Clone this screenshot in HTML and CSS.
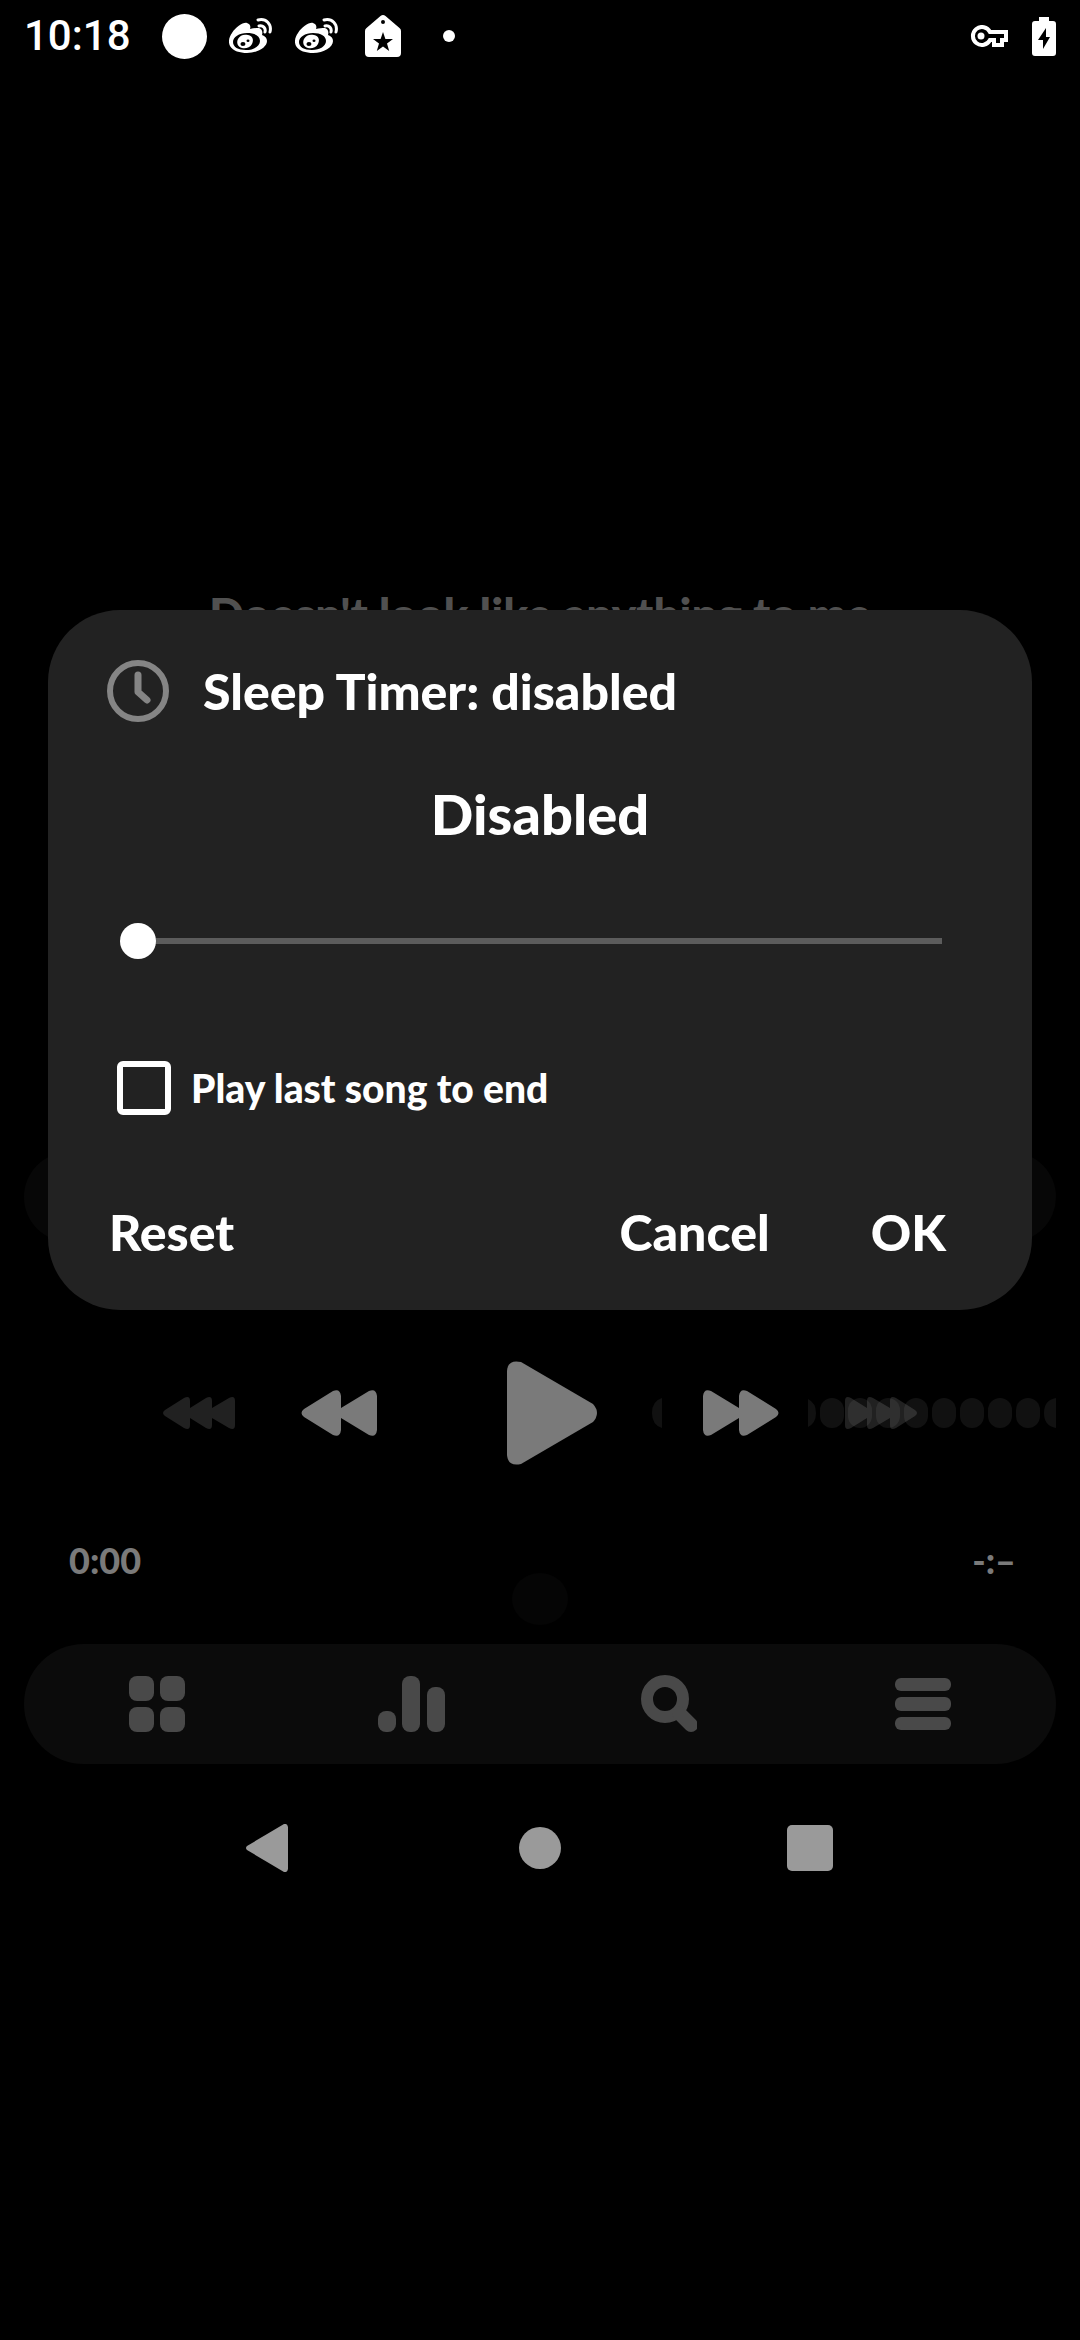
FILE: index.html
```html
<!DOCTYPE html>
<html lang="en">
<head>
<meta charset="utf-8">
<meta name="viewport" content="width=device-width, initial-scale=1">
<title>Sleep Timer</title>
<link rel="stylesheet" href="styles.css">
</head>
<body>
<svg hidden>
  <symbol id="weibo" viewBox="0 0 44 36">
    <path fill="currentColor" fill-rule="evenodd" d="M18 5c-4-1-11 4-15 10-3 4-4 9-2 13 3 5 10 7 17 7 11 0 20-6 20-12 0-3-2-5-5-6 1-3 0-6-3-7-3 0-6 0-9 1 1-3 0-5-3-6zM18 15c8 0 13 3 13 8s-6 9-14 9-13-3-13-8 6-9 14-9z"/>
    <path fill="currentColor" fill-rule="evenodd" d="M19 17c5 1 6 5 4 9s-7 5-10 4c-4-1-6-5-4-9s6-5 10-4zM14 24a2.500 2 0 1 0-.1 4 2.500 2 0 0 0 .1-4zM19 21.500a1.500 1.300 0 1 0 0 2.600 1.500 1.300 0 0 0 0-2.600z"/>
    <path fill="none" stroke="currentColor" stroke-width="3" stroke-linecap="round" d="M30 8c4-1 7 2 6 6M29 2c8-2 14 4 12 12"/>
  </symbol>
</svg>
<header class="status">
  <time class="clock">10:18</time>
  <svg class="s-circle" viewBox="0 0 45 45"><circle cx="22.500" cy="22.500" r="22.500" fill="currentColor"/></svg>
  <svg class="s-weibo" viewBox="0 0 44 36"><use href="#weibo"/></svg>
  <svg class="s-weibo" viewBox="0 0 44 36"><use href="#weibo"/></svg>
  <svg class="s-tag" viewBox="0 0 36 42"><path fill="currentColor" fill-rule="evenodd" d="M15.500 1q2.500-2 5 0L34.500 13q1.500 1 1.500 3v22q0 4-4 4H4q-4 0-4-4V16q0-2 1.500-3zM18 5a2 2 0 1 0 0 4 2 2 0 0 0 0-4zM18 17l-2.400 7H8l6 4.500L11.800 36 18 31.500l6.200 4.500-2.200-7.500 6-4.500h-7.600z"/></svg>
  <svg class="s-dot" viewBox="0 0 12 12"><circle cx="6" cy="6" r="6" fill="currentColor"/></svg>
  <svg class="s-key" viewBox="0 0 38 23"><path fill="none" stroke="currentColor" stroke-width="4" d="M20 7h16v8h-4v5h-8v-5h-4A9 9 0 1 1 20 7z"/><circle cx="11" cy="11" r="3.500" fill="currentColor"/></svg>
  <svg class="s-battery" viewBox="0 0 24 39"><path fill="currentColor" fill-rule="evenodd" d="M7 0h10v4h4q3 0 3 3v29q0 3-3 3H3q-3 0-3-3V7q0-3 3-3h4zM14 11L6 23h5v9l7-12h-4z"/></svg>
</header>

<main class="app">
  <section class="stage">
    <p class="lyric">Doesn't look like anything to me</p>
  </section>
  <div class="panel"></div>

  <section class="controls" aria-label="Playback">
    <svg class="wave" viewBox="0 0 404 30" fill="#111">
      <path d="M10 0Q0 3 0 15t10 15zM156 1q8 4 8 14t-8 14z"/>
      <rect x="168" width="24" height="30" rx="12"/><rect x="196" width="24" height="30" rx="12"/><rect x="224" width="24" height="30" rx="12"/><rect x="252" width="24" height="30" rx="12"/><rect x="280" width="24" height="30" rx="12"/><rect x="308" width="24" height="30" rx="12"/><rect x="336" width="24" height="30" rx="12"/><rect x="364" width="24" height="30" rx="12"/>
      <path d="M404 0Q392 2 392 15t12 15z"/>
    </svg>
    <button class="ctl faint" aria-label="Previous category"><svg width="72" height="32" viewBox="0 0 72 32"><path d="M27 4v24q0 6-6 3L2 19q-4-3 0-6L21 1q6-3 6 3zM27 11L43 1q6-3 6 3v24q0 6-6 3L27 21zM49 11L66 1q6-3 6 3v24q0 6-6 3L49 21z"/></svg></button>
    <button class="ctl" aria-label="Previous"><svg width="76" height="46" viewBox="0 0 76 46"><path d="M40 6v34q-1 8-8 5L3 27q-5-4 0-8L32 1q7-3 8 5zM40 18L68 1q7-3 8 5v34q-1 8-8 5L40 28z"/></svg></button>
    <button class="ctl play" aria-label="Play"><svg width="114" height="104" viewBox="0 0 114 104"><path d="M24 10q1-12 14-9l72 42q8 9 0 18l-72 42q-13 3-14-9z"/></svg></button>
    <button class="ctl" aria-label="Next"><svg width="76" height="46" viewBox="0 0 76 46"><path d="M36 18V6q1-8 8-5l29 18q5 4 0 8L44 45q-7 3-8-5V28L8 45q-7 3-8-5V6q1-8 8-5z"/></svg></button>
    <button class="ctl faint" aria-label="Next category"><svg width="72" height="32" viewBox="0 0 72 32"><path d="M22 11V4q0-6 6-3l17 10V4q0-6 6-3l19 12q4 3 0 6L51 31q-6 3-6-3v-7L28 31q-6 3-6-3v-7L6 31q-6 3-6-3V4q0-6 6-3z"/></svg></button>
  </section>

  <div class="times"><span>0:00</span><span>-:–</span></div>
  <div class="handle"></div>

  <nav class="tabs" aria-label="Main">
    <button aria-label="Library"><svg width="56" height="56"><rect width="25" height="25" rx="8"/><rect x="31" width="25" height="25" rx="8"/><rect y="31" width="25" height="25" rx="8"/><rect x="31" y="31" width="25" height="25" rx="8"/></svg></button>
    <button aria-label="Equalizer"><svg width="68" height="56"><rect y="35" width="18" height="21" rx="8"/><rect x="24" width="18" height="56" rx="8"/><rect x="49" y="11" width="18" height="45" rx="8"/></svg></button>
    <button aria-label="Search"><svg width="58" height="58" viewBox="-2 0 58 58"><circle cx="24" cy="24" r="18" fill="none" stroke="currentColor" stroke-width="12"/><path d="M38 38l12 12" stroke="currentColor" stroke-width="14" stroke-linecap="round"/></svg></button>
    <button aria-label="Menu"><svg width="56" height="52"><rect width="56" height="13" rx="6"/><rect y="19" width="56" height="14" rx="6"/><rect y="39" width="56" height="13" rx="6"/></svg></button>
  </nav>

  <nav class="sysnav" aria-label="System">
    <button aria-label="Back"><svg width="48" height="48"><path d="M42 3v42q-1 4-4 3L1 26q-2-2 0-4L38 0q3-1 4 3z"/></svg></button>
    <button aria-label="Home"><svg width="42" height="42"><circle cx="21" cy="21" r="21"/></svg></button>
    <button aria-label="Recents"><svg width="46" height="46"><rect width="46" height="46" rx="5"/></svg></button>
  </nav>

  <div class="overlay">
    <form class="dialog" role="dialog" aria-labelledby="title">
      <header class="dialog-head">
        <svg class="timer" width="62" height="62" viewBox="0 0 62 62" fill="none" stroke="currentColor"><circle cx="31" cy="31" r="28" stroke-width="6"/><path d="M31 15v17l9 8" stroke-width="7" stroke-linecap="round" stroke-linejoin="round"/></svg>
        <h1 id="title">Sleep Timer: disabled</h1>
      </header>
      <label class="value" for="minutes">Disabled</label>
      <input class="slider" id="minutes" type="range" min="0" max="120" value="0">
      <label class="check"><input type="checkbox"><span>Play last song to end</span></label>
      <footer class="actions">
        <button type="button" class="reset">Reset</button>
        <button type="button">Cancel</button>
        <button type="button">OK</button>
      </footer>
    </form>
  </div>
</main>
</body>
</html>
```
FILE: styles.css
```css
* { box-sizing: border-box; }

body {
  margin: 0;
  min-height: 100vh;
  background: #000;
  color: #fff;
  font-family: Lato, "Noto Sans", sans-serif;
  font-weight: 900;
  position: relative;
}

svg { display: block; flex: none; }
svg[hidden] { display: none; }
h1, p { margin: 0; font-weight: inherit; }

button {
  padding: 0;
  border: 0;
  background: none;
  color: inherit;
  font: inherit;
  display: flex;
  align-items: center;
  justify-content: center;
}
button svg { fill: currentColor; }

.status {
  height: 72px;
  padding: 0 24px;
  display: flex;
  align-items: center;
}
.clock { font: 500 42px/72px Roboto, sans-serif; width: 138px; }
.s-circle { width: 45px; height: 45px; }
.s-weibo { width: 44px; height: 36px; margin-left: 22px; }
.s-tag { width: 36px; height: 42px; margin-left: 26px; }
.s-dot { width: 12px; height: 12px; margin-left: 42px; }
.s-key { width: 38px; height: 23px; margin-left: auto; }
.s-battery { width: 24px; height: 39px; margin-left: 24px; }

.app {
  position: relative;
  margin-top: -72px;
  padding-top: 72px;
}

.stage {
  height: 1080px;
  padding-top: 512px;
  text-align: center;
  color: #505050;
}
.lyric { font-size: 46px; line-height: 60px; }

.panel {
  height: 90px;
  margin: 0 24px;
  border-radius: 45px;
  background: #070707;
}

.controls {
  position: relative;
  height: 144px;
  margin-top: 99px;
  display: flex;
  justify-content: center;
  color: #7a7a7a;
}
.wave { position: absolute; right: 24px; top: 57px; width: 404px; height: 30px; }
.ctl { width: 140px; position: relative; }
.play { width: 262px; }
.faint { color: rgba(255, 255, 255, 0.13); }

.times {
  height: 60px;
  margin-top: 45px;
  padding: 0 64px 0 69px;
  display: flex;
  justify-content: space-between;
  font-size: 36px;
  line-height: 60px;
  color: #7a7a7a;
}

.handle {
  width: 56px;
  height: 52px;
  margin: -17px auto 0;
  border-radius: 50%;
  background: #050505;
}

.tabs {
  height: 120px;
  margin: 19px 24px 0;
  padding: 0 5px;
  border-radius: 60px;
  background: #0b0b0b;
  color: #494949;
  display: flex;
}
.tabs button { flex: 1; }

.sysnav {
  height: 156px;
  padding: 12px 12.5% 0;
  display: flex;
  color: #9a9a9a;
}
.sysnav button { flex: 1; }

.overlay {
  position: absolute;
  inset: 0;
  padding: 0 48px;
  display: flex;
  align-items: center;
}

.dialog {
  width: 100%;
  padding: 50px 72px 48px;
  border-radius: 72px;
  background: #222;
  display: flex;
  flex-direction: column;
}

.dialog-head {
  display: flex;
  align-items: center;
  gap: 34px;
  margin-left: -13px;
}
.timer { color: #858585; }
.dialog-head h1 { font-size: 50px; line-height: 62px; }

.value {
  margin-top: 62px;
  font-size: 56px;
  line-height: 60px;
  text-align: center;
}

.slider {
  appearance: none;
  width: 100%;
  height: 36px;
  margin: 79px 0 0;
  background: linear-gradient(#5c5c5c, #5c5c5c) center / calc(100% - 36px) 6px no-repeat;
}
.slider::-webkit-slider-thumb {
  appearance: none;
  width: 36px;
  height: 36px;
  border-radius: 50%;
  background: #fff;
}

.check {
  margin: 102px 0 0 -3px;
  display: flex;
  align-items: center;
  gap: 20px;
  font-size: 39px;
  line-height: 54px;
}
.check input {
  appearance: none;
  width: 54px;
  height: 54px;
  margin: 0;
  border: 6px solid #fff;
  border-radius: 6px;
}

.actions {
  margin-top: 87px;
  padding: 0 14px 0 0;
  display: flex;
  gap: 101px;
  font-size: 50px;
  line-height: 60px;
}
.reset { margin: 0 auto 0 -11px; }
```
